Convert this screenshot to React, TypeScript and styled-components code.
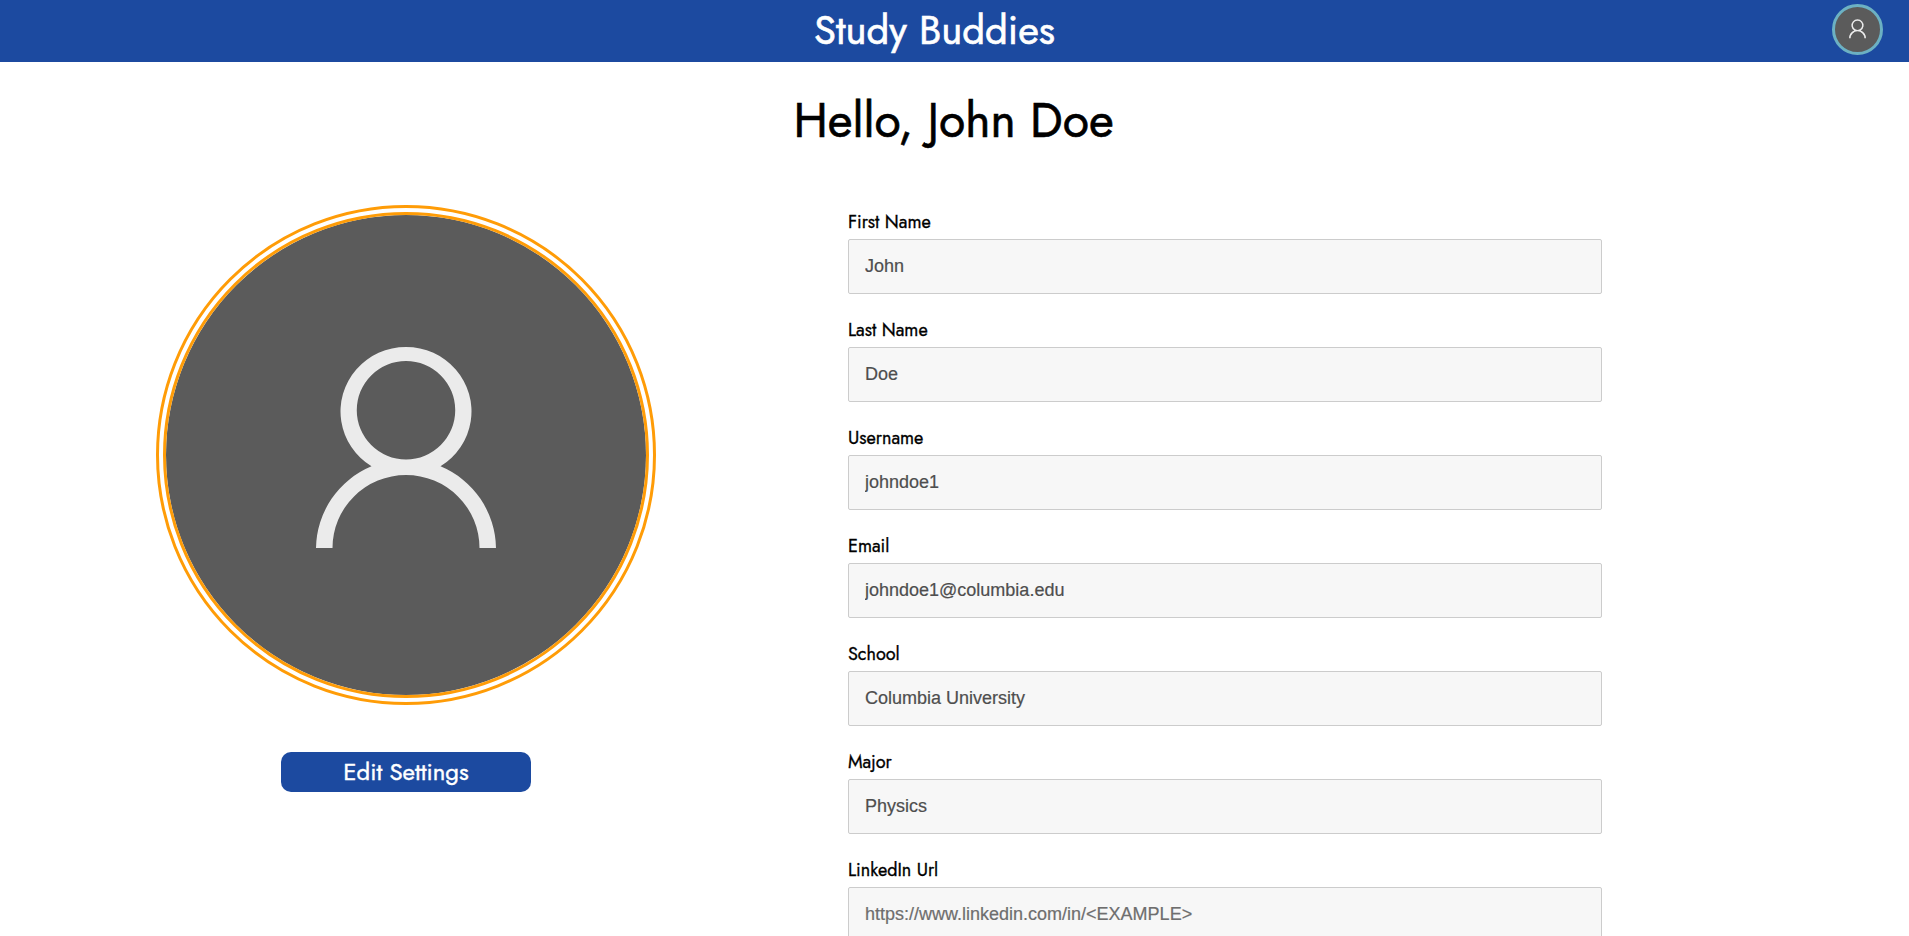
import React from "react";
import styled, { createGlobalStyle } from "styled-components";

const GlobalStyle = createGlobalStyle`
  *, *::before, *::after { box-sizing: border-box; }
  html, body { margin: 0; height: 100%; }
  body {
    overflow: hidden;
    background: #fff;
    color: #000;
    font-family: Jost, Lato, sans-serif;
  }
`;

const Page = styled.div`
  display: flex;
  flex-direction: column;
  height: 100vh;
  overflow: hidden;
`;

const Header = styled.header`
  display: flex;
  align-items: flex-start;
  flex: none;
  height: 62px;
  padding: 0 26px 0 37px;
  background: #1c4aa0;
`;

const Brand = styled.h1`
  flex: 1;
  margin: 0;
  color: #fff;
  font-size: 40px;
  font-weight: 400;
  line-height: 60px;
  text-align: center;
  -webkit-text-stroke: 0.6px currentColor;
`;

const NavAvatar = styled.a`
  display: block;
  width: 51px;
  height: 51px;
  margin-top: 4px;
  border: 3px solid #6cb1c3;
  border-radius: 50%;
  overflow: hidden;
  background: #5b5b5b;
`;

const Greeting = styled.h2`
  flex: none;
  margin: 24px 2px 0 0;
  font-size: 48px;
  font-weight: 400;
  line-height: 70px;
  text-align: center;
  -webkit-text-stroke: 0.6px currentColor;
`;

const Content = styled.main`
  display: flex;
  align-items: flex-start;
  padding-left: 156px;
  margin-top: 49px;
`;

const ProfileColumn = styled.section`
  display: flex;
  flex-direction: column;
  align-items: center;
  width: 500px;
  margin-right: 192px;
`;

const ProfilePicture = styled.div`
  width: 500px;
  height: 500px;
  border: 10px double #ff9c07;
  border-radius: 50%;
  background: #5b5b5b;
  background-clip: padding-box;
  overflow: hidden;
`;

const Silhouette = styled.svg`
  display: block;
  width: 100%;
  height: 100%;
`;

const EditButton = styled.button`
  width: 250px;
  height: 40px;
  margin-top: 47px;
  padding: 0;
  border: 0;
  border-radius: 10px;
  background: #1c4aa0;
  color: #fff;
  font: 400 24px/40px Jost, Lato, sans-serif;
  -webkit-text-stroke: 0.4px currentColor;
`;

const Form = styled.form`
  display: flex;
  flex-direction: column;
  gap: 26px;
  width: 754px;
  padding-top: 7px;
`;

const Field = styled.label`
  display: flex;
  flex-direction: column;
  flex: none;
`;

const FieldName = styled.span`
  height: 27px;
  font-size: 18px;
  line-height: 20px;
  -webkit-text-stroke: 0.3px currentColor;
`;

const Input = styled.input`
  width: 100%;
  height: 55px;
  padding: 0 16px;
  border: 1px solid #ccc;
  border-radius: 2px;
  background: #f7f7f7;
  color: #4e4e4e;
  font: 18px "Liberation Sans", Arial, sans-serif;
  -webkit-text-stroke: 0.2px currentColor;

  &::placeholder {
    color: #6e6e6e;
    opacity: 1;
  }
`;

interface FieldData {
  name: string;
  value?: string;
  placeholder?: string;
}

const fields: FieldData[] = [
  { name: "First Name", value: "John" },
  { name: "Last Name", value: "Doe" },
  { name: "Username", value: "johndoe1" },
  { name: "Email", value: "johndoe1@columbia.edu" },
  { name: "School", value: "Columbia University" },
  { name: "Major", value: "Physics" },
  { name: "LinkedIn Url", placeholder: "https://www.linkedin.com/in/<EXAMPLE>" },
];

function Person() {
  return (
    <Silhouette viewBox="0 0 480 480" aria-hidden="true">
      <path
        fill="#ebebeb"
        fillRule="evenodd"
        d="M150 333 A90 90 0 0 1 205.5 251.3 A65.5 64.5 0 1 1 274.5 251.3 A90 90 0 0 1 330 333 H313.5 A73.5 73 0 0 0 166.5 333 Z M240 146 A49.2 49.2 0 1 0 240 244.4 A49.2 49.2 0 1 0 240 146 Z"
      />
    </Silhouette>
  );
}

export default function App() {
  return (
    <Page>
      <GlobalStyle />
      <Header>
        <Brand>Study Buddies</Brand>
        <NavAvatar aria-label="Profile">
          <Person />
        </NavAvatar>
      </Header>
      <Greeting>Hello, John Doe</Greeting>
      <Content>
        <ProfileColumn>
          <ProfilePicture>
            <Person />
          </ProfilePicture>
          <EditButton>Edit Settings</EditButton>
        </ProfileColumn>
        <Form>
          {fields.map((field) => (
            <Field key={field.name}>
              <FieldName>{field.name}</FieldName>
              <Input defaultValue={field.value} placeholder={field.placeholder} />
            </Field>
          ))}
        </Form>
      </Content>
    </Page>
  );
}
